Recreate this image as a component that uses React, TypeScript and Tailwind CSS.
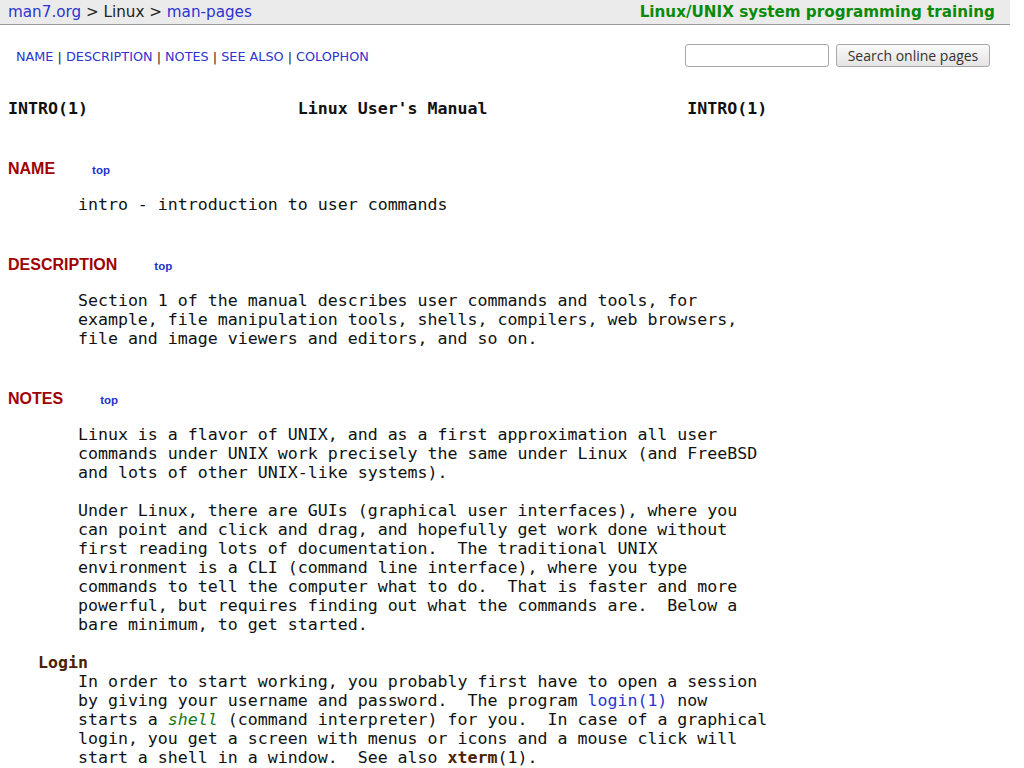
const mono = "font-['DejaVu_Sans_Mono',monospace]";

const Heading = ({ title }: { title: string }) => (
  <div className="mt-[41px] flex h-[20px] items-baseline leading-[20px]">
    <h2 className="font-['Liberation_Sans',Arial,sans-serif] text-[16px] font-bold text-[#a00000]">{title}</h2>
    <a href="#top" className="ml-[37px] font-['Liberation_Sans',Arial,sans-serif] text-[11.5px] font-bold text-[#2233cc] no-underline">
      top
    </a>
  </div>
);

const Pre = ({ children }: { children: React.ReactNode }) => (
  <pre className={`${mono} mt-[16px] whitespace-pre text-[16.6px] leading-[19px] text-[#111]`}>{children}</pre>
);

export default function App() {
  return (
    <div className="min-h-screen w-[1024px] bg-white">
      {/* top bar */}
      <div className="flex h-[25px] w-[1010px] items-center justify-between border-b border-[#9a9a9a] bg-[#ebebeb] px-[8px] font-['DejaVu_Sans',sans-serif] text-[15.2px] leading-[24px]">
        <div className="text-[#222]">
          <a href="#" className="text-[#2b35d0]">man7.org</a> &gt; Linux &gt;{" "}
          <a href="#" className="text-[#2b35d0]">man-pages</a>
        </div>
        <a href="#" className="mr-[7px] font-bold text-[#0a8a0a]">
          Linux/UNIX system programming training
        </a>
      </div>

      {/* section nav + search */}
      <div className="mt-[19px] flex w-[1010px] items-center justify-between pl-[16px] pr-[20px]">
        <div className="pt-[3px] font-['DejaVu_Sans',sans-serif] text-[12.8px] leading-[16px] text-[#222]">
          <a href="#" className="text-[#2b35d0]">NAME</a> |{" "}
          <a href="#" className="text-[#2b35d0]">DESCRIPTION</a> |{" "}
          <a href="#" className="text-[#2b35d0]">NOTES</a> |{" "}
          <a href="#" className="text-[#2b35d0]">SEE ALSO</a> |{" "}
          <a href="#" className="text-[#2b35d0]">COLOPHON</a>
        </div>
        <form className="flex items-center gap-[7px]">
          <input type="text" className="h-[23px] w-[144px] rounded-[3px] border border-[#a8a8a8] bg-white" />
          <button
            type="button"
            className="h-[23px] w-[154px] rounded-[3px] border border-[#a8a8a8] bg-gradient-to-b from-[#fafafa] to-[#e4e4e4] font-['Open_Sans',sans-serif] text-[14px] leading-[20px] text-[#333]"
          >
            Search online pages
          </button>
        </form>
      </div>

      <div className="px-[8px]">
        <pre className={`${mono} mt-[32px] whitespace-pre text-[16.6px] font-bold leading-[19px] text-[#111]`}>
          {"INTRO(1)                     Linux User's Manual                    INTRO(1)"}
        </pre>

        <Heading title="NAME" />
        <Pre>{"       intro - introduction to user commands"}</Pre>

        <Heading title="DESCRIPTION" />
        <Pre>
          {"       Section 1 of the manual describes user commands and tools, for\n" +
            "       example, file manipulation tools, shells, compilers, web browsers,\n" +
            "       file and image viewers and editors, and so on."}
        </Pre>

        <Heading title="NOTES" />
        <Pre>
          {"       Linux is a flavor of UNIX, and as a first approximation all user\n" +
            "       commands under UNIX work precisely the same under Linux (and FreeBSD\n" +
            "       and lots of other UNIX-like systems).\n" +
            "\n" +
            "       Under Linux, there are GUIs (graphical user interfaces), where you\n" +
            "       can point and click and drag, and hopefully get work done without\n" +
            "       first reading lots of documentation.  The traditional UNIX\n" +
            "       environment is a CLI (command line interface), where you type\n" +
            "       commands to tell the computer what to do.  That is faster and more\n" +
            "       powerful, but requires finding out what the commands are.  Below a\n" +
            "       bare minimum, to get started.\n" +
            "\n" +
            "   "}
          <b className="text-[#4a2200]">Login</b>
          {"\n       In order to start working, you probably first have to open a session\n" +
            "       by giving your username and password.  The program "}
          <a href="#" className="text-[#2b35d0]">login(1)</a>
          {" now\n       starts a "}
          <i className="text-[#1a7a1a]">shell</i>
          {" (command interpreter) for you.  In case of a graphical\n" +
            "       login, you get a screen with menus or icons and a mouse click will\n" +
            "       start a shell in a window.  See also "}
          <b className="text-[#4a2200]">xterm</b>
          {"(1)."}
        </Pre>
      </div>
    </div>
  );
}
